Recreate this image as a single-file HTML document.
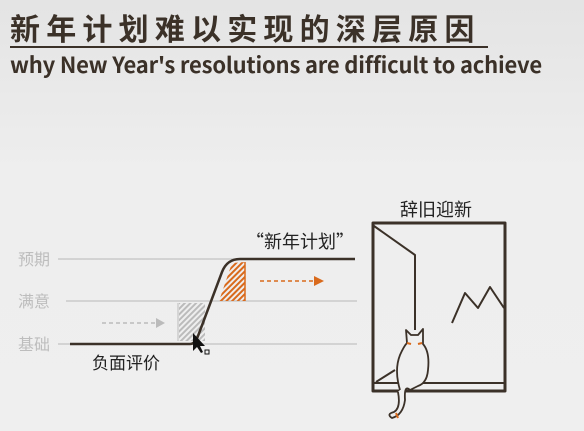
<!DOCTYPE html>
<html><head><meta charset="utf-8"><style>
body{margin:0;width:584px;height:431px;overflow:hidden;background:linear-gradient(#e4e4e4,#eeeeee 40%,#efefef);font-family:"Liberation Sans","Noto Sans CJK SC",sans-serif;}
.t{position:absolute;left:10px;top:5px;font-size:30px;font-weight:bold;color:#3b3128;letter-spacing:6.2px;white-space:nowrap;font-family:"Noto Sans CJK SC",sans-serif}
.u{position:absolute;left:10px;top:46px;width:478px;height:2px;background:#3b3128}
.s{position:absolute;left:10px;top:48px;font-size:22px;font-weight:bold;color:#3b3128;white-space:nowrap;letter-spacing:-0.2px;font-family:"Noto Sans CJK SC",sans-serif}
</style></head><body>
<div class="t">新年计划难以实现的深层原因</div>
<div class="u"></div>
<div class="s">why New Year's resolutions are difficult to achieve</div>
<svg width="584" height="431" style="position:absolute;left:0;top:0">
<defs>
<pattern id="hg" width="4" height="4" patternUnits="userSpaceOnUse" patternTransform="rotate(45)"><rect width="2" height="4" fill="#bbb"/></pattern>
<pattern id="ho" width="4" height="4" patternUnits="userSpaceOnUse" patternTransform="rotate(45)"><rect width="2" height="4" fill="#d96a1c"/></pattern>
</defs>
<g font-family="Noto Sans CJK SC,sans-serif" font-size="16" fill="#bdbdbd">
<text x="18" y="265">预期</text><text x="18" y="307">满意</text><text x="18" y="350">基础</text></g>
<g stroke="#c2c2c2" stroke-width="1.3">
<line x1="58" y1="259" x2="355" y2="259"/><line x1="66" y1="301" x2="357" y2="301"/><line x1="58" y1="344" x2="357" y2="344"/></g>
<rect x="179" y="303" width="26" height="38" fill="url(#hg)"/>
<line x1="178" y1="303" x2="178" y2="341" stroke="#bbb"/>
<polygon points="219,301 232,263 245,262 245,301" fill="url(#ho)"/>
<line x1="245" y1="262" x2="245" y2="301" stroke="#d96a1c" stroke-width="1.5"/>
<path d="M70,344 L190,344 Q195,344 198,336 L222,272 Q227,259 240,259 L355,259" fill="none" stroke="#3b3128" stroke-width="2.5"/>
<line x1="102" y1="323" x2="156" y2="323" stroke="#bbb" stroke-width="1.5" stroke-dasharray="4,3"/>
<polygon points="156,318 165,323 156,328" fill="#bbb"/>
<line x1="260" y1="281" x2="314" y2="281" stroke="#d96a1c" stroke-width="1.5" stroke-dasharray="4,3"/>
<polygon points="314,276 324,281 314,286" fill="#d96a1c"/>
<polygon points="193,333 193,351 197,347 201,353 203,352 200,346 205,346" fill="#111"/>
<rect x="205" y="350" width="4" height="4" fill="none" stroke="#111" stroke-width="1"/>
<g font-family="Noto Sans CJK SC,sans-serif" fill="#222">
<text x="246" y="248" font-size="18">“新年计划”</text>
<text x="92" y="369" font-size="17">负面评价</text>
<text x="400" y="216" font-size="18">辞旧迎新</text></g>
<g fill="none" stroke="#3b3128" stroke-width="3" stroke-linejoin="round">
<rect x="373" y="223" width="132" height="168"/></g>
<g fill="none" stroke="#3b3128" stroke-width="2" stroke-linejoin="round">
<line x1="374" y1="383" x2="505" y2="383"/>
<path d="M374,226 L415,255 L415,330"/>
<path d="M452,323 L465,293 L478,308 L490,287 L504,308"/>
<path d="M376,382 L395,370"/>
</g>
<path d="M400,390 Q394,370 400,355 Q404,346 407,343 L406,330 L411,335 L418,335 L423,329 L423,344 Q430,352 428,370 Q427,383 418,386 L410,390 Q404,384 405,400 Q403,415 392,418 Q386,414 394,412 Q401,408 398,392" fill="#efefef" stroke="#3b3128" stroke-width="1.8" stroke-linejoin="round"/>
<g stroke="#d96a1c" stroke-width="2"><line x1="407" y1="343" x2="411" y2="344"/><line x1="418" y1="344" x2="422" y2="343"/><line x1="396" y1="413" x2="398" y2="418"/></g>
</svg>
</body></html>
